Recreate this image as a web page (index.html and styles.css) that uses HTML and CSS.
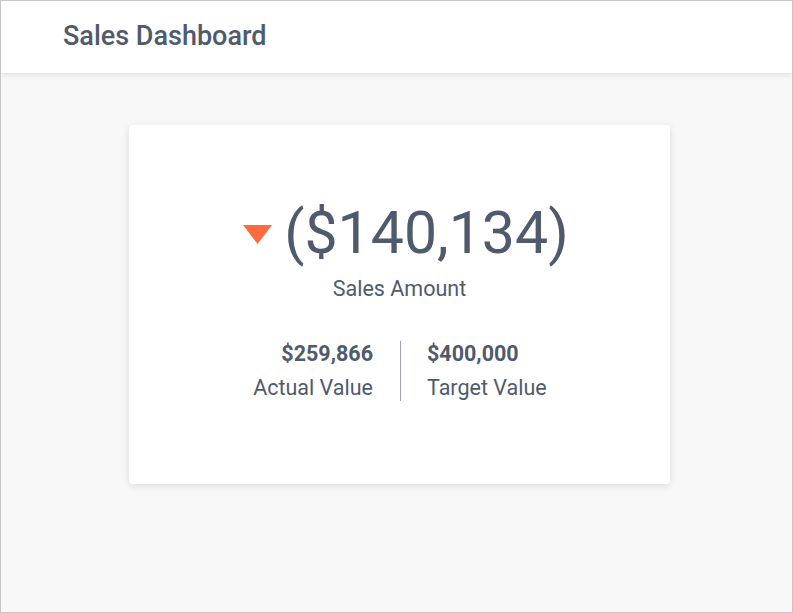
FILE: index.html
```html
<!DOCTYPE html>
<html>
<head>
<meta charset="utf-8">
<link rel="stylesheet" href="styles.css">
</head>
<body>
<div class="frame">
  <header class="topbar">
    <h1 class="title">Sales Dashboard</h1>
  </header>
  <main class="main">
    <section class="card">
      <div class="kpi">
        <svg class="arrow" width="29" height="19" viewBox="0 0 29 19"><polygon points="0,0 29,0 14.5,19" fill="#ff6b3d"/></svg>
        <span class="kpi-value">($140,134)</span>
      </div>
      <div class="kpi-label">Sales Amount</div>
      <div class="compare">
        <div class="cell cell-left">
          <div class="cell-value">$259,866</div>
          <div class="cell-label">Actual Value</div>
        </div>
        <div class="divider"></div>
        <div class="cell cell-right">
          <div class="cell-value">$400,000</div>
          <div class="cell-label">Target Value</div>
        </div>
      </div>
    </section>
  </main>
</div>
</body>
</html>
```
FILE: styles.css
```css
* { box-sizing: border-box; }
html, body { margin: 0; padding: 0; }
body {
  font-family: Roboto, "Liberation Sans", sans-serif;
  color: #4f5b6d;
  background: #fff;
}
.frame {
  width: 793px;
  height: 613px;
  border: 1px solid #c6c6c6;
  background: #f8f8f8;
  overflow: hidden;
}
.topbar {
  height: 72px;
  background: #fff;
  box-shadow: 0 2px 6px rgba(0,0,0,0.10);
  display: flex;
  align-items: center;
  padding-left: 62px;
  position: relative;
}
.title {
  margin: 0;
  font-size: 27px;
  font-weight: 500;
  color: #4f5b6d;
  margin-top: -2px;
}
.main {
  padding: 52px 0 0 128px;
}
.card {
  width: 541px;
  height: 359px;
  background: #fff;
  border-radius: 4px;
  box-shadow: 0 2px 8px rgba(0,0,0,0.12);
  display: flex;
  flex-direction: column;
  align-items: center;
  padding-top: 74px;
}
.kpi {
  display: flex;
  align-items: center;
  gap: 12px;
  margin-left: 13px;
}
.arrow { display: block; margin-top: 2px; }
.kpi-value {
  font-size: 59px;
  line-height: 68px;
  font-weight: 400;
}
.kpi-label {
  font-size: 21.5px;
  line-height: 26px;
  margin-top: 9px;
}
.compare {
  display: flex;
  margin-top: 39px;
  margin-left: 2px;
}
.cell {
  display: flex;
  flex-direction: column;
  gap: 8px;
}
.cell-left { align-items: flex-end; padding-right: 27px; width: 153px; }
.cell-right { align-items: flex-start; padding-left: 26px; width: 153px; }
.cell-value {
  font-size: 21.5px;
  line-height: 26px;
  font-weight: 700;
}
.cell-label {
  font-size: 21.5px;
  line-height: 26px;
}
.divider {
  width: 1px;
  background: #a0a4ab;
}
```
